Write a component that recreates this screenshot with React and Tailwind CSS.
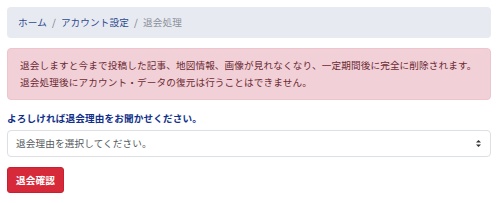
import React, { useState } from "react";

const font = { fontFamily: '"Noto Sans CJK JP", "Noto Sans", sans-serif' };

function Breadcrumb() {
  return (
    <nav className="flex h-[31px] items-center rounded-[4px] bg-[#e8eaf2] px-[11px] text-[9.6px] tracking-[0.15px]">
      <a className="text-[#2c4a8f]">ホーム</a>
      <span className="px-[5px] text-[#6c757d]">/</span>
      <a className="text-[#2c4a8f]">アカウント設定</a>
      <span className="px-[5px] text-[#6c757d]">/</span>
      <span className="text-[#8a9099]">退会処理</span>
    </nav>
  );
}

function App() {
  const [reason, setReason] = useState("");

  return (
    <div style={font} className="w-[500px] bg-white px-[7px] pt-[7px] pb-[10px]">
      <div className="w-[484px]">
        <Breadcrumb />

        <div className="mt-[10px] whitespace-nowrap rounded-[4px] border border-[#eec5cc] bg-[#f2d0d7] px-[12px] py-[8px] text-[9.6px] leading-[17px] tracking-[0.15px] text-[#6b2a33]">
          <p>退会しますと今まで投稿した記事、地図情報、画像が見れなくなり、一定期間後に完全に削除されます。</p>
          <p>退会処理後にアカウント・データの復元は行うことはできません。</p>
        </div>

        <p className="mt-[10px] text-[9.6px] font-bold leading-[16px] tracking-[0.15px] text-[#12308a]">
          よろしければ退会理由をお聞かせください。
        </p>

        <div className="relative mt-[4px]">
          <select
            value={reason}
            onChange={(e) => setReason(e.target.value)}
            style={font}
            className="block h-[27px] w-full appearance-none rounded-[4px] border border-[#dcdfe4] bg-white pl-[8px] text-[9.6px] tracking-[0.15px] text-[#555a60] outline-none"
          >
            <option value="">退会理由を選択してください。</option>
            <option value="1">使わなくなった</option>
            <option value="2">その他</option>
          </select>
          <svg
            className="pointer-events-none absolute right-[10px] top-[10px]"
            width="5"
            height="7"
            viewBox="0 0 5 7"
          >
            <path d="M2.5 0 L5 2.6 H0 Z" fill="#333" />
            <path d="M2.5 7 L5 4.4 H0 Z" fill="#333" />
          </svg>
        </div>

        <div className="mt-[10px] flex">
          <button
            type="button"
            className="h-[26px] rounded-[3px] border border-[#c8202f] bg-[#d62a3b] px-[8px] text-[9.6px] font-bold tracking-[0.15px] text-white"
          >
            退会確認
          </button>
        </div>
      </div>
    </div>
  );
}

export default App;
